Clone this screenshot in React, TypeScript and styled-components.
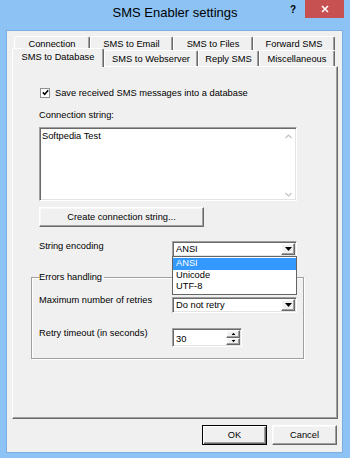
import React from 'react'
import styled, { createGlobalStyle, css } from 'styled-components'

const GlobalStyle = createGlobalStyle`
  html, body {
    margin: 0;
    padding: 0;
    background: #8cc3f4;
  }
  body {
    font-family: 'Liberation Sans', Arial, sans-serif;
    font-size: 9.3px;
    color: #000;
  }
`

const raised = css`
  border: 1px solid;
  border-color: #fff #696969 #696969 #fff;
  box-shadow: inset -1px -1px #a0a0a0, inset 1px 1px #f8f8f8;
`

const sunken = css`
  border: 1px solid;
  border-color: #a0a0a0 #fff #fff #a0a0a0;
  box-shadow: inset 1px 1px #696969, inset -1px -1px #e3e3e3;
`

const topTabs = [
  { label: 'Connection', w: 76 },
  { label: 'SMS to Email', w: 83 },
  { label: 'SMS to Files', w: 80 },
  { label: 'Forward SMS', w: 82 },
]

const bottomTabs = [
  { label: 'SMS to Database', w: 92, active: true },
  { label: 'SMS to Webserver', w: 94 },
  { label: 'Reply SMS', w: 61 },
  { label: 'Miscellaneous', w: 76 },
]

const encodings = ['ANSI', 'Unicode', 'UTF-8']

const Arrow = ({ up }: { up?: boolean }) => (
  <svg width="7" height="4" viewBox="0 0 7 4">
    <path d={up ? 'M0 4 L3.5 0 L7 4 Z' : 'M0 0 L7 0 L3.5 4 Z'} fill="#000" />
  </svg>
)

const Chevron = ({ up }: { up?: boolean }) => (
  <svg width="7" height="5" viewBox="0 0 7 5">
    <path
      d={up ? 'M0.5 4 L3.5 1 L6.5 4' : 'M0.5 1 L3.5 4 L6.5 1'}
      fill="none"
      stroke="#c2c2c2"
      strokeWidth="1.2"
    />
  </svg>
)

const App: React.FC = () => {
  return (
    <>
      <GlobalStyle />
      <Window>
        <TitleBar>
          <Title>SMS Enabler settings</Title>
          <Controls>
            <HelpGlyph>?</HelpGlyph>
            <CloseButton>
              <svg width="8" height="8" viewBox="0 0 8 8">
                <path d="M1 1 L7 7 M7 1 L1 7" stroke="#fff" strokeWidth="1.6" />
              </svg>
            </CloseButton>
          </Controls>
        </TitleBar>

        <Client>
          <TabRow $h={14} $indent={2}>
            {topTabs.map((t) => (
              <Tab key={t.label} $w={t.w}>
                {t.label}
              </Tab>
            ))}
          </TabRow>
          <TabRow $h={16}>
            {bottomTabs.map((t) => (
              <Tab key={t.label} $w={t.w} $active={t.active}>
                {t.label}
              </Tab>
            ))}
          </TabRow>

          <Panel>
            <CheckRow>
              <CheckBox>
                <svg width="7" height="7" viewBox="0 0 7 7">
                  <path d="M0.8 3.4 L2.7 5.3 L6.2 1.2" fill="none" stroke="#000" strokeWidth="1.5" />
                </svg>
              </CheckBox>
              Save received SMS messages into a database
            </CheckRow>

            <Caption>Connection string:</Caption>
            <TextBox>
              <TextContent>Softpedia Test</TextContent>
              <ScrollColumn>
                <Chevron up />
                <Chevron />
              </ScrollColumn>
            </TextBox>

            <PushButton $w={165}>Create connection string...</PushButton>

            <FieldRow $top={14}>
              <FieldLabel>String encoding</FieldLabel>
              <Combo>
                <ComboText>ANSI</ComboText>
                <ArrowButton>
                  <Arrow />
                </ArrowButton>
                <DropList>
                  {encodings.map((e, i) => (
                    <ListItem key={e} $selected={i === 0}>
                      {e}
                    </ListItem>
                  ))}
                </DropList>
              </Combo>
            </FieldRow>

            <Group>
              <GroupLegend>Errors handling</GroupLegend>
              <FieldRow $top={0}>
                <FieldLabel $lift={2}>Maximum number of retries</FieldLabel>
                <Combo>
                  <ComboText>Do not retry</ComboText>
                  <ArrowButton>
                    <Arrow />
                  </ArrowButton>
                </Combo>
              </FieldRow>
              <FieldRow $top={15}>
                <FieldLabel>Retry timeout (in seconds)</FieldLabel>
                <Spin>
                  <SpinText>30</SpinText>
                  <SpinButtons>
                    <SpinButton>
                      <Arrow up />
                    </SpinButton>
                    <SpinButton>
                      <Arrow />
                    </SpinButton>
                  </SpinButtons>
                </Spin>
              </FieldRow>
            </Group>
          </Panel>

          <Footer>
            <PushButton $w={65} $default>
              OK
            </PushButton>
            <PushButton $w={65}>Cancel</PushButton>
          </Footer>
        </Client>
      </Window>
    </>
  )
}

export default App

const Window = styled.div`
  position: relative;
  width: 350px;
  height: 458px;
  display: flex;
  flex-direction: column;
  background: #8cc3f4;
  overflow: hidden;
`

const TitleBar = styled.div`
  height: 31px;
  display: grid;
  grid-template-columns: 1fr auto 1fr;
  align-items: start;
`

const Title = styled.div`
  grid-column: 2;
  padding-top: 5px;
  font-size: 13px;
  line-height: 16px;
  color: #000;
`

const Controls = styled.div`
  grid-column: 3;
  justify-self: end;
  display: flex;
  align-items: flex-start;
  margin-right: 6px;
`

const HelpGlyph = styled.span`
  margin: 5px 9px 0 0;
  font-size: 10px;
  font-weight: bold;
  line-height: 10px;
`

const CloseButton = styled.div`
  width: 39px;
  height: 18px;
  display: flex;
  align-items: center;
  justify-content: center;
  background: #c75050;
`

const Client = styled.div`
  flex: 1;
  display: flex;
  flex-direction: column;
  margin: 0 8px 6px 7px;
  padding: 5px 4px 0 5px;
  background: #f0f0f0;
  box-shadow: 0 0 0 1px #7daee0;
`

const TabRow = styled.div<{ $h: number; $indent?: number }>`
  display: flex;
  align-items: flex-end;
  height: ${(p) => p.$h}px;
  margin-left: ${(p) => p.$indent ?? 0}px;
`

const Tab = styled.div<{ $w: number; $active?: boolean }>`
  width: ${(p) => p.$w}px;
  height: 100%;
  box-sizing: border-box;
  display: flex;
  align-items: center;
  justify-content: center;
  background: #f0f0f0;
  white-space: nowrap;
  border-top: 1px solid #fff;
  border-left: 1px solid #fff;
  border-right: 1px solid #696969;
  border-radius: 2px 2px 0 0;
  box-shadow: inset -1px 0 #a0a0a0;

  ${(p) =>
    p.$active &&
    css`
      position: relative;
      z-index: 1;
      height: calc(100% + 3px);
      margin-bottom: -1px;
      padding-bottom: 2px;
    `}
`

const Panel = styled.div`
  position: relative;
  flex: 1;
  display: flex;
  flex-direction: column;
  align-items: flex-start;
  padding: 20px 0 0 26px;
  border: 1px solid;
  border-color: #fff #696969 #696969 #fff;
  box-shadow: inset -1px -1px #a0a0a0;
`

const CheckRow = styled.label`
  display: flex;
  align-items: center;
  gap: 5px;
  height: 11px;
  margin-left: 1px;
`

const CheckBox = styled.span`
  width: 10px;
  height: 10px;
  box-sizing: border-box;
  display: flex;
  align-items: center;
  justify-content: center;
  background: #fff;
  border: 1px solid #8e8f8f;
`

const Caption = styled.div`
  margin-top: 12px;
  line-height: 11px;
`

const TextBox = styled.div`
  width: 258px;
  height: 74px;
  box-sizing: border-box;
  margin-top: 6px;
  display: flex;
  background: #fff;
  ${sunken}
`

const TextContent = styled.div`
  flex: 1;
  padding: 3px 0 0 2px;
  line-height: 11px;
`

const ScrollColumn = styled.div`
  width: 16px;
  display: flex;
  flex-direction: column;
  justify-content: space-between;
  align-items: center;
  padding: 6px 0 3px;
`

const PushButton = styled.button<{ $w: number; $default?: boolean }>`
  width: ${(p) => p.$w}px;
  height: 20px;
  margin-top: 6px;
  padding: 0;
  font: inherit;
  color: #000;
  background: #f0f0f0;
  ${raised}

  ${(p) =>
    p.$default &&
    css`
      border: 1px solid #000;
      box-shadow: inset 1px 1px #fff, inset -1px -1px #696969, inset -2px -2px #a0a0a0;
    `}
`

const FieldRow = styled.div<{ $top: number }>`
  display: grid;
  grid-template-columns: 133px auto;
  align-items: start;
  margin-top: ${(p) => p.$top}px;
`

const FieldLabel = styled.span<{ $lift?: number }>`
  line-height: 11px;
  margin-top: ${(p) => -(p.$lift ?? 0)}px;
  white-space: nowrap;
`

const Combo = styled.div`
  position: relative;
  width: 125px;
  height: 16px;
  box-sizing: border-box;
  display: flex;
  align-items: stretch;
  background: #fff;
  ${sunken}
`

const ComboText = styled.span`
  flex: 1;
  display: flex;
  align-items: center;
  padding-left: 3px;
`

const ArrowButton = styled.span`
  width: 14px;
  box-sizing: border-box;
  margin: 1px;
  display: flex;
  align-items: center;
  justify-content: center;
  background: #f0f0f0;
  ${raised}
`

const DropList = styled.div`
  position: absolute;
  z-index: 2;
  top: 100%;
  left: -1px;
  width: 125px;
  box-sizing: border-box;
  padding: 1px 0;
  background: #fff;
  border: 1px solid #646464;
`

const ListItem = styled.div<{ $selected?: boolean }>`
  height: 11.5px;
  line-height: 11.5px;
  padding-left: 3px;
  background: ${(p) => (p.$selected ? '#3399ff' : 'transparent')};
  color: ${(p) => (p.$selected ? '#fff' : '#000')};
`

const Group = styled.fieldset`
  width: 273px;
  box-sizing: border-box;
  margin: 15px 0 0 -8px;
  padding: 14px 7px 11px 7px;
  min-inline-size: auto;
  border: 1px solid #a0a0a0;
  box-shadow: 1px 1px 0 #fff, inset 1px 1px 0 #fff;
`

const GroupLegend = styled.legend`
  padding: 0 2px 0 0;
  line-height: 11px;
`

const Spin = styled.div`
  width: 70px;
  height: 19px;
  box-sizing: border-box;
  display: flex;
  background: #fff;
  ${sunken}
`

const SpinText = styled.span`
  flex: 1;
  display: flex;
  align-items: center;
  padding: 3px 0 0 3px;
`

const SpinButtons = styled.div`
  width: 14px;
  margin: 1px;
  display: flex;
  flex-direction: column;
`

const SpinButton = styled.span`
  flex: 1;
  box-sizing: border-box;
  display: flex;
  align-items: center;
  justify-content: center;
  background: #f0f0f0;
  ${raised}

  svg {
    transform: scale(0.6);
  }
`

const Footer = styled.div`
  display: flex;
  justify-content: flex-end;
  gap: 5px;
  padding: 0 1px 7px 0;

  & > button {
    margin-top: 6px;
  }
`
